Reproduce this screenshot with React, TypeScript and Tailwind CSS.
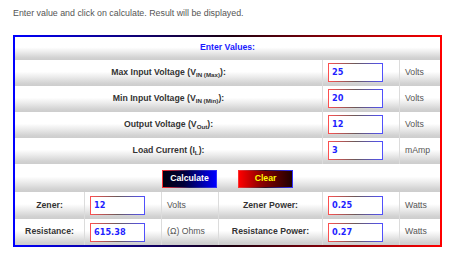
import React from "react";

const rowBg =
  "bg-[linear-gradient(to_bottom,#ffffff_0%,#ffffff_45%,#ececec_65%,#d2d2d2_90%,#cdcdcd_100%)]";

function Input({ value }: { value: string }) {
  return (
    <div
      className="w-[55px] h-[19px] flex items-center pl-[3px] bg-white border border-solid [border-image:linear-gradient(to_right,#ff5050,#6a5a5a_50%,#5050ff)_1] text-[#1f1fff] font-bold text-[8.2px] [font-family:'DejaVu_Sans',sans-serif]"
    >
      {value}
    </div>
  );
}

function Label({ children }: { children: React.ReactNode }) {
  return (
    <span className="font-bold text-[#333] text-[8.7px] [font-family:'Liberation_Sans',Arial,sans-serif] whitespace-nowrap">
      {children}
    </span>
  );
}

function Sub({ children }: { children: React.ReactNode }) {
  return <sub className="text-[6.2px] align-baseline relative top-[2px]">{children}</sub>;
}

function Unit({ children }: { children: React.ReactNode }) {
  return (
    <span className="text-[#555] text-[8.7px] [font-family:'Liberation_Sans',Arial,sans-serif] whitespace-nowrap">
      {children}
    </span>
  );
}

function InputRow({
  label,
  value,
  unit,
}: {
  label: React.ReactNode;
  value: string;
  unit: string;
}) {
  return (
    <div className={`flex h-[26px] ${rowBg}`}>
      <div className="w-[307px] flex items-center justify-center pb-[1px]">
        <Label>{label}</Label>
      </div>
      <div className="w-[77px] flex items-center pl-[5px] border-l border-[#dcdcdc] pb-[1px]">
        <Input value={value} />
      </div>
      <div className="flex-1 flex items-center pl-[5px] border-l border-[#dcdcdc] pb-[1px]">
        <Unit>{unit}</Unit>
      </div>
    </div>
  );
}

function ResultRow({
  h,
  l1,
  v1,
  u1,
  l2,
  v2,
  u2,
}: {
  h: string;
  l1: string;
  v1: string;
  u1: string;
  l2: string;
  v2: string;
  u2: string;
}) {
  return (
    <div className={`flex ${h} ${rowBg}`}>
      <div className="w-[69px] flex items-center justify-center">
        <Label>{l1}</Label>
      </div>
      <div className="w-[77px] flex items-center pl-[5px] border-l border-[#dcdcdc]">
        <Input value={v1} />
      </div>
      <div className="w-[57px] flex items-center pl-[5px] border-l border-[#dcdcdc]">
        <Unit>{u1}</Unit>
      </div>
      <div className="w-[104px] flex items-center justify-center border-l border-[#dcdcdc]">
        <Label>{l2}</Label>
      </div>
      <div className="w-[77px] flex items-center pl-[5px] border-l border-[#dcdcdc]">
        <Input value={v2} />
      </div>
      <div className="flex-1 flex items-center pl-[5px] border-l border-[#dcdcdc]">
        <Unit>{u2}</Unit>
      </div>
    </div>
  );
}

export default function App() {
  return (
    <div className="w-[450px] h-[255px] bg-white overflow-hidden [font-family:'Liberation_Sans',Arial,sans-serif]">
      <div className="h-[35px] pl-[13px] pt-[9px] text-[8.86px] leading-none text-[#555] whitespace-nowrap">
        Enter value and click on calculate. Result will be displayed.
      </div>
      <div className="ml-[13px] w-[429px] border-2 border-solid [border-image:linear-gradient(to_right,#0000ff,#1a0010_50%,#ff0000)_1] flex flex-col">
        <div className={`h-[23px] flex items-center justify-center ${rowBg}`}>
          <span className="font-bold text-[#1a1aff] text-[8.7px] pb-[1px]">Enter Values:</span>
        </div>
        <InputRow
          label={
            <>
              Max Input Voltage (V<Sub>IN (Max)</Sub>):
            </>
          }
          value="25"
          unit="Volts"
        />
        <InputRow
          label={
            <>
              Min Input Voltage (V<Sub>IN (Min)</Sub>):
            </>
          }
          value="20"
          unit="Volts"
        />
        <InputRow
          label={
            <>
              Output Voltage (V<Sub>Out</Sub>):
            </>
          }
          value="12"
          unit="Volts"
        />
        <InputRow
          label={
            <>
              Load Current (I<Sub>L</Sub>):
            </>
          }
          value="3"
          unit="mAmp"
        />
        <div className={`h-[28px] flex items-center justify-center gap-[21px] pt-[2px] ${rowBg}`}>
          <button className="w-[55px] h-[18px] flex items-center justify-center border border-solid [border-image:linear-gradient(to_right,#ff3030,#202060_50%,#3030ff)_1] bg-[linear-gradient(to_right,#000010,#00003a_40%,#0000ff)] text-white font-bold text-[8.7px]">
            Calculate
          </button>
          <button className="w-[55px] h-[18px] flex items-center justify-center border border-solid [border-image:linear-gradient(to_right,#ff3030,#301020_50%,#3030ff)_1] bg-[linear-gradient(to_right,#ff0000,#900000_40%,#200000)] text-[#ffff00] font-bold text-[8.7px]">
            Clear
          </button>
        </div>
        <ResultRow
          h="h-[27px]"
          l1="Zener:"
          v1="12"
          u1="Volts"
          l2="Zener Power:"
          v2="0.25"
          u2="Watts"
        />
        <ResultRow
          h="h-[26px]"
          l1="Resistance:"
          v1="615.38"
          u1="(Ω) Ohms"
          l2="Resistance Power:"
          v2="0.27"
          u2="Watts"
        />
      </div>
    </div>
  );
}
